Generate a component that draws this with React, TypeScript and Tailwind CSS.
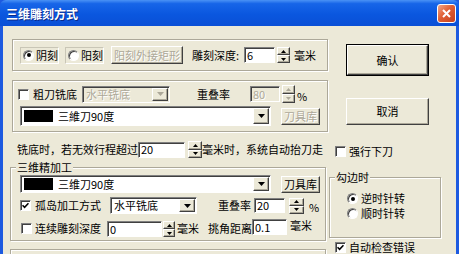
import React from "react";

// classic win32 look
const sunken =
  "border border-t-[#808080] border-l-[#808080] border-b-white border-r-white shadow-[inset_1px_1px_0_#404040]";
const raised =
  "border border-t-white border-l-white border-b-[#404040] border-r-[#404040] shadow-[inset_-1px_-1px_0_#ACA899]";
const etched = "border border-[#ACA899] shadow-[inset_1px_1px_0_#fff,1px_1px_0_#fff]";
const grayText = "text-[#ACA899] [text-shadow:1px_1px_0_#fff]";

function Check({ checked }: { checked?: boolean }) {
  return (
    <span className={`flex h-[11px] w-[11px] shrink-0 items-center justify-center bg-white ${sunken}`}>
      {checked && (
        <svg width="7" height="7" viewBox="0 0 7 7">
          <path d="M0.5 3.2 L2.6 5.4 L6.5 1.2" stroke="#000" strokeWidth="1.6" fill="none" />
        </svg>
      )}
    </span>
  );
}

function Radio({ checked }: { checked?: boolean }) {
  return (
    <span
      className={`flex h-[11px] w-[11px] shrink-0 items-center justify-center rounded-full bg-white ${sunken}`}
    >
      {checked && <span className="h-[4px] w-[4px] rounded-full bg-black" />}
    </span>
  );
}

function Edit({ cls, v, dis }: { cls: string; v: string; dis?: boolean }) {
  return (
    <div
      className={`flex shrink-0 items-center pl-[2px] leading-none ${sunken} ${
        dis ? `bg-[#ECE9D8] ${grayText}` : "bg-white"
      } ${cls}`}
    >
      {v}
    </div>
  );
}

function Arrow({ up, dis }: { up?: boolean; dis?: boolean }) {
  return (
    <svg width="5" height="3" viewBox="0 0 5 3">
      <path d={up ? "M0 3 L2.5 0 L5 3 Z" : "M0 0 L5 0 L2.5 3 Z"} fill={dis ? "#ACA899" : "#000"} />
    </svg>
  );
}

function Spin({ cls, dis }: { cls: string; dis?: boolean }) {
  return (
    <div className={`flex shrink-0 flex-col ${cls}`}>
      <div className={`flex flex-1 items-center justify-center bg-[#ECE9D8] ${raised}`}>
        <Arrow up dis={dis} />
      </div>
      <div className={`flex flex-1 items-center justify-center bg-[#ECE9D8] ${raised}`}>
        <Arrow dis={dis} />
      </div>
    </div>
  );
}

function Combo({ cls, dis, children }: { cls: string; dis?: boolean; children: React.ReactNode }) {
  return (
    <div
      className={`flex shrink-0 items-center p-[1px] ${sunken} ${dis ? "bg-[#ECE9D8]" : "bg-white"} ${cls}`}
    >
      <div className={`flex flex-1 items-center whitespace-nowrap ${dis ? grayText : ""}`}>{children}</div>
      <div className={`flex h-full w-[16px] items-center justify-center bg-[#ECE9D8] ${raised}`}>
        <svg width="7" height="4" viewBox="0 0 7 4">
          <path d="M0 0 L7 0 L3.5 4 Z" fill={dis ? "#ACA899" : "#000"} />
        </svg>
      </div>
    </div>
  );
}

function Btn({ cls, dis, children }: { cls: string; dis?: boolean; children: React.ReactNode }) {
  return (
    <div
      className={`flex shrink-0 items-center justify-center whitespace-nowrap bg-[#ECE9D8] ${raised} ${
        dis ? grayText : ""
      } ${cls}`}
    >
      {children}
    </div>
  );
}

function Tool({ name }: { name: string }) {
  return (
    <div className="flex items-center pl-[2px]">
      <span className="h-[12px] w-[29px] bg-black" />
      <span className="ml-[5px]">{name}</span>
    </div>
  );
}

export default function App() {
  return (
    <div className="flex h-[254px] w-[459px] flex-col overflow-hidden bg-[#1D5AE0] font-['Noto_Sans_CJK_SC','Noto_Sans',sans-serif] text-[11px] leading-[13px] text-black">
      {/* title bar */}
      <div className="flex h-[26px] shrink-0 items-center justify-between rounded-t-[6px] bg-[linear-gradient(180deg,#4A92F5_0%,#1765E8_14%,#0A57DF_55%,#0A4FD6_100%)] pl-[6px] pr-[3px]">
        <span className="text-[12px] font-bold text-white [text-shadow:1px_1px_0_#0A2A8A]">三维雕刻方式</span>
        <div className="flex h-[19px] w-[19px] items-center justify-center rounded-[3px] border border-white bg-[linear-gradient(135deg,#F2A689_0%,#E05F34_45%,#C4411F_100%)]">
          <svg width="9" height="9" viewBox="0 0 9 9">
            <path d="M1 1 L8 8 M8 1 L1 8" stroke="#fff" strokeWidth="2" />
          </svg>
        </div>
      </div>

      {/* client area */}
      <div className="mx-[3px] flex flex-1 flex-col bg-[#ECE9D8]">
        {/* row A */}
        <div className="mt-[13px] flex h-[41px] shrink-0">
          <div className="w-[326px] shrink-0 pl-[9px]">
            <div className={`flex h-[32px] w-[316px] items-center ${etched}`}>
              <div className="ml-[7px] flex h-[17px] w-[39px] items-center border border-t-[#C9C6B6] border-l-[#C9C6B6] border-b-white border-r-white pl-[2px]">
                <Radio checked />
                <span className="ml-[2px]">阴刻</span>
              </div>
              <div className="ml-[6px] flex h-[17px] w-[39px] items-center border border-t-[#C9C6B6] border-l-[#C9C6B6] border-b-white border-r-white pl-[2px]">
                <Radio />
                <span className="ml-[2px]">阳刻</span>
              </div>
              <Btn cls="ml-[7px] h-[18px] w-[72px]" dis>
                阳刻外接矩形
              </Btn>
              <span className="ml-[9px] w-[52px] shrink-0">雕刻深度:</span>
              <Edit cls="h-[16px] w-[31px]" v="6" />
              <Spin cls="ml-[2px] h-[16px] w-[13px]" />
              <span className="ml-[4px]">毫米</span>
            </div>
          </div>
          <div className="ml-[17px] mt-[5px] h-[32px] w-[83px] border border-black">
            <Btn cls="h-full w-full">确认</Btn>
          </div>
        </div>

        {/* row B */}
        <div className="flex h-[60px] shrink-0">
          <div className="w-[326px] shrink-0 pl-[9px]">
            <div className={`flex h-[52px] w-[316px] flex-col ${etched}`}>
              <div className="mt-[4px] flex h-[18px] items-center">
                <span className="ml-[5px]">
                  <Check />
                </span>
                <span className="ml-[4px]">粗刀铣底</span>
                <Combo cls="ml-[5px] h-[17px] w-[88px]" dis>
                  <span className="pl-[2px]">水平铣底</span>
                </Combo>
                <span className="ml-[27px]">重叠率</span>
                <Edit cls="ml-[20px] h-[16px] w-[30px]" v="80" dis />
                <Spin cls="ml-[2px] h-[18px] w-[13px]" dis />
                <span className="ml-[2px] self-end">%</span>
              </div>
              <div className="mt-[3px] flex h-[20px] items-center">
                <Combo cls="ml-[7px] h-[20px] w-[251px]">
                  <Tool name="三維刀90度" />
                </Combo>
                <Btn cls="ml-[10px] h-[17px] w-[39px]" dis>
                  刀具库
                </Btn>
              </div>
            </div>
          </div>
          <Btn cls="ml-[17px] mt-[18px] h-[27px] w-[83px]">取消</Btn>
        </div>

        {/* row C */}
        <div className="flex h-[21px] shrink-0">
          <div className="mt-[1px] flex h-[17px] w-[326px] shrink-0 items-center pl-[14px]">
            <span>铣底时，若无效行程超过</span>
            <Edit cls="h-[16px] w-[47px]" v="20" />
            <Spin cls="ml-[3px] h-[17px] w-[14px]" />
            <span className="whitespace-nowrap">毫米时，系统自动抬刀走</span>
          </div>
          <div className="mt-[5px] flex h-[13px] items-center">
            <span className="ml-[6px]">
              <Check />
            </span>
            <span className="ml-[3px]">强行下刀</span>
          </div>
        </div>

        {/* row D */}
        <div className="flex h-[80px] shrink-0">
          <div className="w-[326px] shrink-0 pl-[7px]">
            <fieldset className={`h-[80px] w-[316px] ${etched}`}>
              <legend className="ml-[5px] bg-[#ECE9D8] px-[1px] leading-[13px]">三维精加工</legend>
              <div className="mt-[1px] flex h-[18px] items-center">
                <Combo cls="ml-[9px] h-[18px] w-[251px]">
                  <Tool name="三维刀90度" />
                </Combo>
                <Btn cls="ml-[10px] h-[17px] w-[39px]">刀具库</Btn>
              </div>
              <div className="mt-[4px] flex h-[17px] items-center">
                <span className="ml-[9px]">
                  <Check checked />
                </span>
                <span className="ml-[4px]">孤岛加工方式</span>
                <Combo cls="ml-[9px] h-[17px] w-[87px]">
                  <span className="pl-[2px]">水平铣底</span>
                </Combo>
                <span className="ml-[21px]">重叠率</span>
                <Edit cls="ml-[3px] h-[15px] w-[31px]" v="20" />
                <Spin cls="ml-[4px] h-[16px] w-[15px]" />
                <span className="ml-[5px] self-end">%</span>
              </div>
              <div className="mt-[5px] flex h-[18px] items-center">
                <span className="ml-[10px]">
                  <Check />
                </span>
                <span className="ml-[3px]">连续雕刻深度</span>
                <Edit cls="ml-[6px] h-[16px] w-[55px] self-end" v="0" />
                <Spin cls="ml-[1px] h-[16px] w-[12px] self-end" />
                <span className="ml-[2px]">毫米</span>
                <span className="ml-[9px]">挑角距离</span>
                <Edit cls="h-[16px] w-[35px] self-start" v="0.1" />
                <span className="ml-[3px] self-start">毫米</span>
              </div>
            </fieldset>
          </div>
          <fieldset className={`mt-[10px] h-[67px] w-[112px] ${etched}`}>
            <legend className="ml-[5px] bg-[#ECE9D8] px-[1px] leading-[13px]">勾边时</legend>
            <div className="mt-[8px] flex h-[13px] items-center">
              <span className="ml-[17px]">
                <Radio checked />
              </span>
              <span className="ml-[3px]">逆时针转</span>
            </div>
            <div className="mt-[2px] flex h-[13px] items-center">
              <span className="ml-[17px]">
                <Radio />
              </span>
              <span className="ml-[3px]">顺时针转</span>
            </div>
          </fieldset>
        </div>

        {/* row E */}
        <div className="flex h-[20px] shrink-0">
          <div className="w-[326px] shrink-0 pl-[7px]">
            <div className={`mt-[8px] h-[20px] w-[316px] ${etched}`} />
          </div>
          <div className="flex h-[13px] items-center">
            <span className="ml-[6px]">
              <Check checked />
            </span>
            <span className="ml-[3px]">自动检查错误</span>
          </div>
        </div>
      </div>
    </div>
  );
}
